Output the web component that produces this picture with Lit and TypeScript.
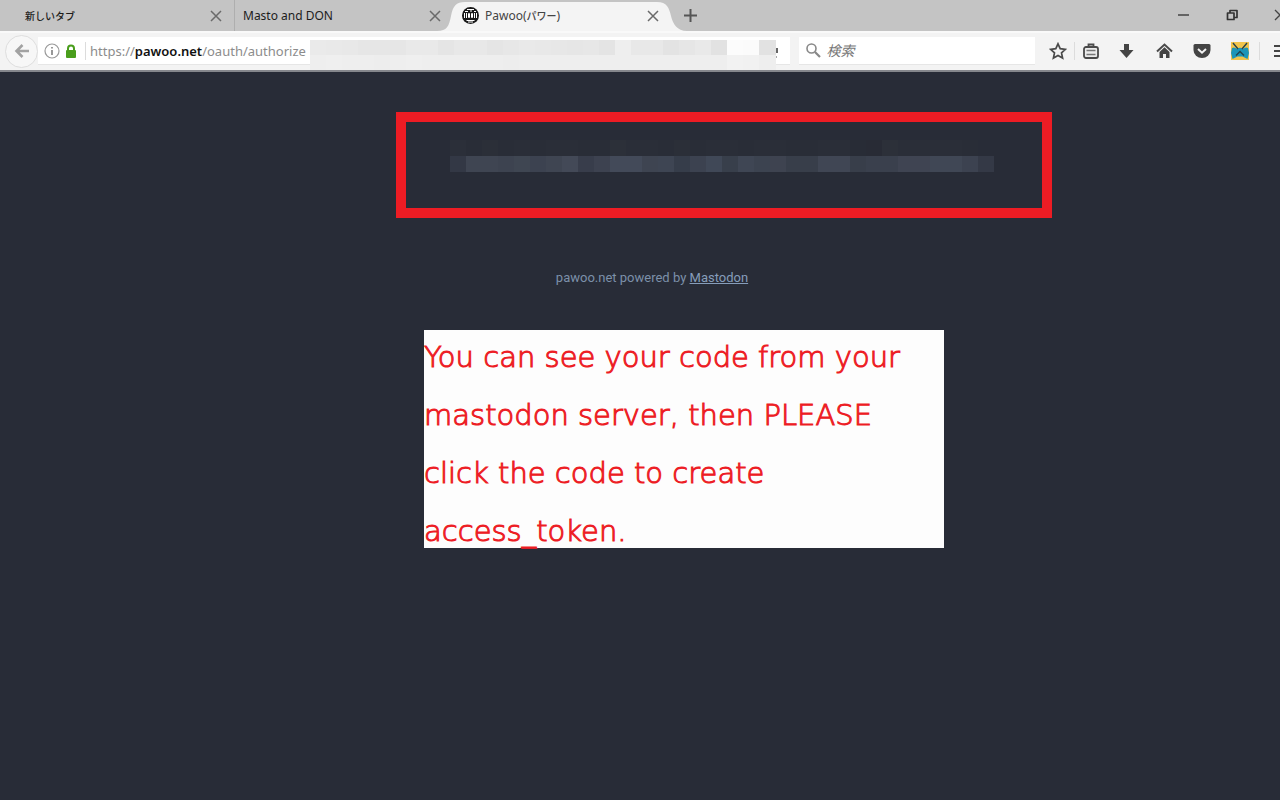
import { LitElement, html, css, svg } from "lit";
import { customElement } from "lit/decorators.js";

const ADDRESS_TOP = "eae9e8e6e6e6e9e9e5e8e8e5e7e9e8e7e6e7e4eee8e8e3e6e9e2fcfbe2".match(/../g)!;
const ADDRESS_BOTTOM = "eeefeeeeedeeefeeeeeeeeeeedeeeeeeeeeeeeeeeeeeeeeeeeeef2f1ee".match(/../g)!;

const CODE_TOP = [
  "2b2f39", "292d37", "2b2f38", "292d37", "2a2e38", "292d37", "2a2e38", "2a2e38", "292d37", "292d37", "2c3039", "2a2e38",
  "2a2e38", "292d37", "2b2f38", "292d37", "2a2e38", "2a2e38", "292d37", "2a2e38", "2a2e38", "292d37", "292d37", "2a2e38",
  "2a2e38", "282c36", "282b35", "2c3039", "2a2e38", "2a2e38", "2a2e38", "2a2e38", "292d37", "282c37",
];
const CODE_BOTTOM = [
  "333845", "3f4552", "3f4552", "3d4350", "3f4652", "3c4250", "3f4552", "434957", "383d4b", "3d4250", "434a59", "434a59",
  "3e4451", "3e4553", "363d4a", "3c4250", "404857", "383f4b", "3f4654", "3c4350", "3e4350", "383e4a", "383e4a", "404654",
  "404654", "383e4a", "3a404d", "3a404d", "3f4452", "3f4452", "404755", "404755", "3c4250", "343946",
];

const closeIcon = svg`<svg width="12" height="12" viewBox="0 0 12 12"><path d="M1 1l10 10M11 1L1 11" stroke="#6a6a6a" stroke-width="1.5" fill="none"/></svg>`;

@customElement("app-root")
export class AppRoot extends LitElement {
  static styles = css`
    :host {
      display: flex;
      flex-direction: column;
      min-height: 100vh;
      background: #282c37;
      overflow: hidden;
      font-family: "Noto Sans", "Noto Sans CJK JP", sans-serif;
    }
    button {
      border: 0;
      padding: 0;
      margin: 0;
      background: none;
      display: grid;
      place-items: center;
      flex: none;
      font: inherit;
    }
    svg { display: block; }
    .tabs {
      display: flex;
      height: 31px;
      background: #c4c4c4;
      color: #1c1c1c;
      font-size: 12px;
      line-height: 16px;
    }
    .tab {
      display: flex;
      align-items: center;
      justify-content: space-between;
      box-sizing: border-box;
      flex: none;
      white-space: nowrap;
    }
    .first { width: 234px; padding: 0 12px 0 25px; }
    .second { width: 219px; padding: 0 12px 0 8px; border-left: 1px solid #aeaeae; }
    .active { position: relative; width: 224px; padding: 0 18px 0 9px; color: #444; }
    .jp { font-family: "Noto Sans CJK JP", sans-serif; font-size: 10px; font-weight: 500; }
    .shape { position: absolute; left: -16px; top: 0; }
    .title { position: relative; display: flex; align-items: center; gap: 6px; }
    .active button { position: relative; }
    .second button { position: relative; z-index: 1; }
    .plus { position: relative; width: 26px; }
    .window { display: flex; margin-left: auto; margin-right: -24px; }
    .window button { width: 48px; height: 29px; }
    .bar {
      display: flex;
      align-items: center;
      box-sizing: border-box;
      height: 41px;
      padding: 0 0 1px 5px;
      background: #f3f3f3;
      border-top: 2px solid #f9f9f9;
      border-bottom: 2px solid #85878c;
    }
    .back {
      box-sizing: border-box;
      width: 33px;
      height: 33px;
      border: 1px solid #dedede;
      border-radius: 50%;
      background: #f7f7f7;
    }
    .address {
      position: relative;
      box-sizing: border-box;
      flex: 744 1 0;
      display: flex;
      align-items: center;
      height: 28px;
      padding-left: 6px;
      background: #fff;
      border-bottom: 1px solid #e6e6e6;
      font-size: 13px;
      color: #8c8c8c;
      white-space: nowrap;
    }
    .lock { margin-left: 5px; }
    .rule { width: 1px; height: 18px; background: #dcdcdc; flex: none; }
    .address .rule { margin: 0 4px 0 8px; }
    .host { color: #111; font-weight: 600; }
    input {
      border: 0;
      outline: 0;
      padding: 0;
      min-width: 0;
      flex: 1;
      background: none;
      font: inherit;
    }
    .mosaic { display: grid; grid-auto-rows: 16px; }
    .address-mosaic {
      position: absolute;
      left: 272px;
      right: 14px;
      top: 3px;
      grid-template-columns: repeat(29, 1fr);
      grid-auto-rows: 15px;
    }
    .search {
      box-sizing: border-box;
      flex: 229 1 0;
      display: flex;
      align-items: center;
      gap: 6px;
      height: 28px;
      margin-left: 9px;
      padding-left: 7px;
      background: #fff;
      border-bottom: 1px solid #e6e6e6;
      font-size: 14px;
      font-style: italic;
    }
    .search input::placeholder { color: #777; opacity: 1; }
    .tools { display: flex; align-items: center; margin-left: 7px; flex: none; }
    .tools button { width: 38px; height: 30px; }
    .tools .star { width: 32px; }
    .tools .list { width: 32px; }
    .tools .menu { width: 20px; }
    .annotated {
      display: grid;
      grid-template-columns: 396fr 656fr 228fr;
      padding-top: 40px;
    }
    .frame {
      grid-column: 2;
      box-sizing: border-box;
      height: 106px;
      padding: 18px 48px 0 44px;
      border: 10px solid #ed1c24;
    }
    .code-mosaic { grid-template-columns: repeat(34, 1fr); }
    footer {
      margin-top: 52px;
      padding-left: 24px;
      text-align: center;
      font: 13px/16px Roboto, sans-serif;
      color: #7c90a9;
    }
    footer a { color: #869dba; }
    .notes {
      display: grid;
      grid-template-columns: 424fr 520fr 336fr;
      margin-top: 44px;
    }
    .note {
      grid-column: 2;
      display: grid;
      gap: 26px;
      margin: 0;
      padding: 11px 0 1px;
      background: #fdfdfd;
      color: #ed1c24;
      font: 29px/32px "DejaVu Sans", sans-serif;
      font-weight: 200;
      -webkit-text-stroke: 1px #ed1c24;
      white-space: nowrap;
    }
  `;

  private mosaic(name: string, colors: string[]) {
    return html`<div class="mosaic ${name}" aria-hidden="true">
      ${colors.map((c) => html`<span style="background:#${c}"></span>`)}
    </div>`;
  }

  render() {
    return html`
      <div class="tabs" role="tablist">
        <div class="tab first" role="tab"><span class="jp">新しいタブ</span><button aria-label="Close tab">${closeIcon}</button></div>
        <div class="tab second" role="tab"><span>Masto and DON</span><button aria-label="Close tab">${closeIcon}</button></div>
        <div class="tab active" role="tab" aria-selected="true">
          <svg class="shape" width="250" height="31" viewBox="0 0 250 31"><path d="M0 31C10 31 12 26 14 16S19 2 28 2H220C230 2 232 8 234 16S240 31 250 31Z" fill="#f4f4f4"/></svg>
          <span class="title">
            <svg width="17" height="17" viewBox="0 0 17 17"><circle cx="8.500" cy="8.500" r="8.500" fill="#181818"/><path d="M5 2.500h7M3 4.500h3M8 4h2M12 4.500h2M4.500 13.500h8M6 15h5" stroke="#fff" stroke-width="1"/><path d="M2.500 6v5M4.500 6v5M12.500 6v5M14.500 6v5M6.500 6.500h1v4h-1zM9.500 6.500h1v4h-1z" stroke="#fff" stroke-width="1" fill="none"/></svg>
            <span>Pawoo(<span class="jp">パワー</span>)</span>
          </span>
          <button aria-label="Close tab">${closeIcon}</button>
        </div>
        <button class="plus" aria-label="New tab"><svg width="13" height="13" viewBox="0 0 13 13"><path d="M6.500 0v13M0 6.500h13" stroke="#555" stroke-width="2"/></svg></button>
        <div class="window">
          <button aria-label="Minimize"><svg width="12" height="12" viewBox="0 0 12 12"><path d="M0 6h11" stroke="#444" stroke-width="1.500"/></svg></button>
          <button aria-label="Restore"><svg width="12" height="12" viewBox="0 0 12 12"><path d="M1.500 4h6.500v6.500H1.500zM4 4V1.500h7V8.500H8" fill="none" stroke="#333" stroke-width="1.700" stroke-linejoin="round"/></svg></button>
          <button aria-label="Close window"><svg width="12" height="12" viewBox="0 0 12 12"><path d="M1 1l10 10M11 1L1 11" stroke="#444" stroke-width="1.300"/></svg></button>
        </div>
      </div>
      <div class="bar">
        <button class="back" aria-label="Back"><svg width="16" height="16" viewBox="0 0 16 16"><path d="M15 8H3M8.500 2L2.500 8l6 6" fill="none" stroke="#a2a2a2" stroke-width="2.600"/></svg></button>
        <div class="address">
          <svg width="16" height="16" viewBox="0 0 16 16"><circle cx="8" cy="8" r="7" fill="none" stroke="#999" stroke-width="1.200"/><path d="M8 7v5M8 4v1.500" stroke="#777" stroke-width="1.500"/></svg>
          <svg class="lock" width="12" height="14" viewBox="0 0 12 14"><rect x="1" y="6" width="10" height="8" rx="1" fill="#4a9e1c"/><path d="M3 7V4.500a3 3 0 0 1 6 0V7" fill="none" stroke="#4a9e1c" stroke-width="2"/></svg>
          <span class="rule"></span>
          <label for="url">https://<span class="host">pawoo.net</span>/oauth/authorize</label>
          <input id="url" type="text">
          <svg width="14" height="28" viewBox="0 0 14 28" aria-hidden="true"><path d="M0 11h2v5H0z" fill="#666"/><path d="M0 19h1v2H0z" fill="#aaa"/></svg>
          ${this.mosaic("address-mosaic", [...ADDRESS_TOP, ...ADDRESS_BOTTOM].map((c) => c + c + c))}
        </div>
        <label class="search">
          <svg width="15" height="15" viewBox="0 0 15 15"><circle cx="5.500" cy="5.500" r="4.500" fill="none" stroke="#888" stroke-width="1.600"/><path d="M9 9l5 5" stroke="#888" stroke-width="2.200"/></svg>
          <input type="text" placeholder="検索" aria-label="検索">
        </label>
        <div class="tools">
          <button class="star" aria-label="Bookmark"><svg width="18" height="18" viewBox="0 0 18 18"><path d="M9 1.800l2.200 4.900 5.200.6-3.900 3.500 1.100 5.300L9 13.500l-4.600 2.600 1.100-5.300L1.600 7.300l5.200-.6z" fill="none" stroke="#4a4a4a" stroke-width="1.700"/></svg></button>
          <span class="rule"></span>
          <button class="list" aria-label="Bookmarks list"><svg width="16" height="16" viewBox="0 0 16 16"><rect x="1" y="4" width="14" height="11" rx="2" fill="#ececec" stroke="#4a4a4a" stroke-width="1.800"/><path d="M5.500 4V1.500h5V4" fill="none" stroke="#4a4a4a" stroke-width="1.800"/><path d="M3.500 7.500h9M3.500 11.500h9" stroke="#777" stroke-width="1.600"/></svg></button>
          <button aria-label="Downloads"><svg width="15" height="16" viewBox="0 0 15 16"><path d="M5 1h5v6h4.500L7.500 15 .5 7H5z" fill="#444"/></svg></button>
          <button aria-label="Home"><svg width="17" height="16" viewBox="0 0 17 16"><path d="M1 8.500L8.500 1.500l7.500 7" fill="none" stroke="#4a4a4a" stroke-width="2"/><path d="M3.500 9l5-4.700 5 4.700v6H10v-4H7v4H3.500z" fill="#444"/></svg></button>
          <button aria-label="Pocket"><svg width="18" height="16" viewBox="0 0 18 16"><path d="M2 1h14q1.500 0 1.500 1.500V7A8.500 8 0 0 1 .5 7V2.500Q.5 1 2 1z" fill="#444"/><path d="M5 6l4 3.700L13 6" fill="none" stroke="#f4f4f4" stroke-width="2"/></svg></button>
          <button aria-label="Extension"><svg width="18" height="18" viewBox="0 0 18 18"><rect width="18" height="18" fill="#f1c44c"/><path d="M1 6Q3.500 4.500 6 7q3-2.500 6 0 2.500-2.500 5-1l1 5-1.500 6-5-2.500h-5L1.500 17 0 11z" fill="#1c95b8"/><path d="M2 1l5 6M16 1l-5 6M5 13.500l4-4 4 4" fill="none" stroke="#24434b" stroke-width="1.400"/></svg></button>
          <span class="rule"></span>
          <button class="menu" aria-label="Menu"><svg width="20" height="14" viewBox="0 0 20 14"><path d="M14 2h6M14 7h6M14 12h6" stroke="#444" stroke-width="2.200"/></svg></button>
        </div>
      </div>
      <main>
        <div class="annotated"><div class="frame">${this.mosaic("code-mosaic", [...CODE_TOP, ...CODE_BOTTOM])}</div></div>
        <footer>pawoo.net powered by <a href="#">Mastodon</a></footer>
        <div class="notes">
          <p class="note">
            <span>You can see your code from your</span>
            <span>mastodon server, then PLEASE</span>
            <span>click the code to create</span>
            <span>access_token.</span>
          </p>
        </div>
      </main>
    `;
  }
}
